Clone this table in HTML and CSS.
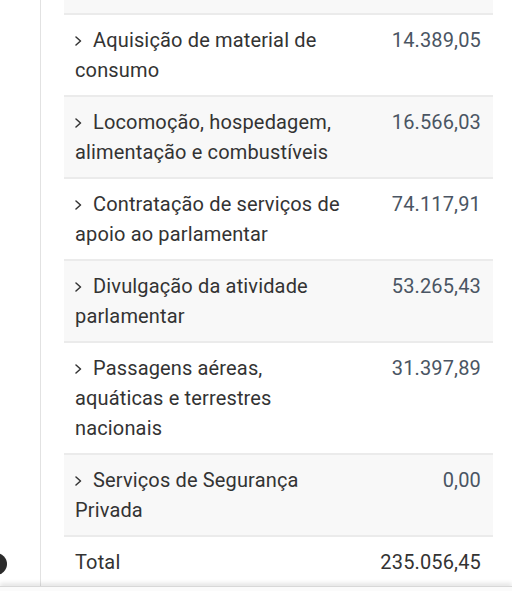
FILE: index.html
```html
<!DOCTYPE html>
<html lang="pt-BR">
<head>
<meta charset="utf-8">
<title>Despesas</title>
<link rel="stylesheet" href="styles.css">
</head>
<body>
<div class="page">
  <div class="panel">
    <div class="table">
      <div class="row alt stub"></div>
      <div class="row">
        <div class="label"><svg class="chev" viewBox="0 0 7 10"><path d="M1 1 L5.5 5 L1 9"/></svg>Aquisição de material de consumo</div>
        <div class="value">14.389,05</div>
      </div>
      <div class="row alt">
        <div class="label"><svg class="chev" viewBox="0 0 7 10"><path d="M1 1 L5.5 5 L1 9"/></svg>Locomoção, hospedagem, alimentação e combustíveis</div>
        <div class="value">16.566,03</div>
      </div>
      <div class="row">
        <div class="label"><svg class="chev" viewBox="0 0 7 10"><path d="M1 1 L5.5 5 L1 9"/></svg>Contratação de serviços de apoio ao parlamentar</div>
        <div class="value">74.117,91</div>
      </div>
      <div class="row alt">
        <div class="label"><svg class="chev" viewBox="0 0 7 10"><path d="M1 1 L5.5 5 L1 9"/></svg>Divulgação da atividade parlamentar</div>
        <div class="value">53.265,43</div>
      </div>
      <div class="row">
        <div class="label"><svg class="chev" viewBox="0 0 7 10"><path d="M1 1 L5.5 5 L1 9"/></svg>Passagens aéreas, aquáticas e terrestres nacionais</div>
        <div class="value">31.397,89</div>
      </div>
      <div class="row alt">
        <div class="label"><svg class="chev" viewBox="0 0 7 10"><path d="M1 1 L5.5 5 L1 9"/></svg>Serviços de Segurança Privada</div>
        <div class="value">0,00</div>
      </div>
      <div class="row total">
        <div class="label">Total</div>
        <div class="value">235.056,45</div>
      </div>
    </div>
  </div>
  <div class="bottom-bar"></div>
  <div class="dot"></div>
</div>
</body>
</html>
```
FILE: styles.css
```css
html, body {
  margin: 0;
  padding: 0;
  background: #ffffff;
}
.page {
  position: relative;
  width: 512px;
  height: 591px;
  overflow: hidden;
  font-family: Roboto, "Liberation Sans", sans-serif;
  font-size: 20px;
  letter-spacing: 0.15px;
  color: #333333;
}
.panel {
  margin-left: 40px;
  height: 586px;
  border-left: 1px solid #e2e2e2;
  padding-left: 23px;
  overflow: hidden;
}
.table {
  width: 429px;
}
.row {
  display: flex;
  justify-content: space-between;
  align-items: flex-start;
  padding: 10px 12px 10px 11px;
  border-top: 2px solid #ebebeb;
  line-height: 30px;
  background: #ffffff;
}
.row.alt {
  background: #f8f8f8;
}
.row.stub {
  height: 13px;
  padding: 0;
  border-top: none;
}
.label {
  width: 272px;
}
.chev {
  width: 7px;
  height: 10px;
  margin-right: 11px;
  vertical-align: 1px;
  fill: none;
  stroke: #333333;
  stroke-width: 1.5;
  stroke-linecap: round;
  stroke-linejoin: round;
}
.value {
  color: #4a5563;
  text-align: right;
  white-space: nowrap;
}
.total .value {
  color: #333333;
}
.bottom-bar {
  height: 5px;
  background: #fbfbfb;
  border-top: 1px solid #d8d8d8;
  box-shadow: 0 -3px 4px rgba(0, 0, 0, 0.10);
  position: relative;
}
.dot {
  position: absolute;
  left: -15px;
  top: 553px;
  width: 22px;
  height: 22px;
  border-radius: 50%;
  background: #2b2b2b;
}
```
